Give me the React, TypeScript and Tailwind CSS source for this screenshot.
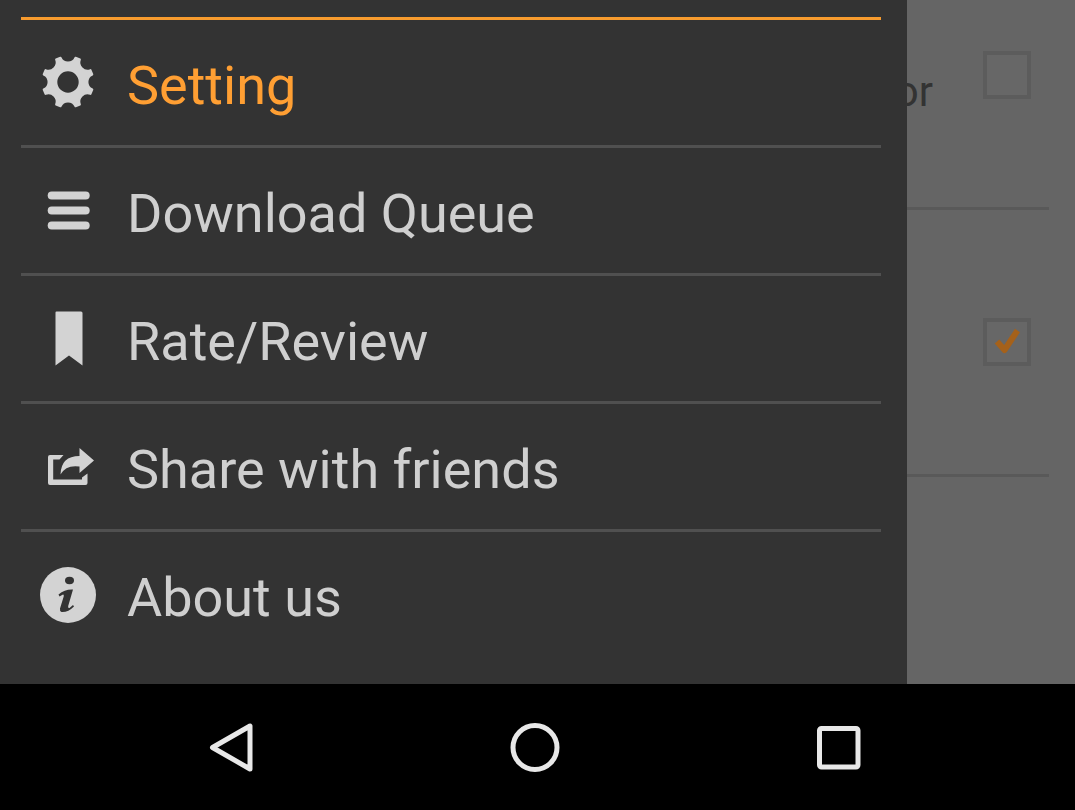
import type { ReactNode } from 'react';

const GearIcon = () => (
  <svg viewBox="-28 -27 56 56" className="size-14" fill="#d3d3d3" aria-hidden="true">
    <path
      fillRule="evenodd"
      stroke="#d3d3d3"
      strokeWidth="2"
      strokeLinejoin="round"
      d="M-7.500 -24.300 A8.2 8.2 0 0 0 7.500 -24.300 L11.900 -22.500 A8.2 8.2 0 0 0 22.500 -11.900 L24.300 -7.500 A8.2 8.2 0 0 0 24.300 7.500 L22.500 11.900 A8.2 8.2 0 0 0 11.900 22.500 L7.500 24.300 A8.2 8.2 0 0 0 -7.500 24.300 L-11.900 22.500 A8.2 8.2 0 0 0 -22.500 11.900 L-24.300 7.500 A8.2 8.2 0 0 0 -24.300 -7.500 L-22.500 -11.900 A8.2 8.2 0 0 0 -11.900 -22.500 Z M0 -11.7 A11.7 11.7 0 1 0 0 11.7 A11.7 11.7 0 1 0 0 -11.7 Z"
    />
  </svg>
);

const QueueIcon = () => (
  <svg viewBox="0 0 56 56" className="size-14" fill="#d3d3d3" aria-hidden="true">
    <rect x="7.700" y="8.500" width="42" height="8" rx="4" />
    <rect x="7.700" y="23.500" width="42" height="8" rx="4" />
    <rect x="7.700" y="38.500" width="42" height="8" rx="4" />
  </svg>
);

const BookmarkIcon = () => (
  <svg viewBox="0 0 56 56" className="size-14" fill="#d3d3d3" aria-hidden="true">
    <path d="M16.500 0.500 H41 Q42.500 0.500 42.500 2 V54.500 L29 44.500 L15.500 54.500 V1.500 Q15.500 0.500 16.500 0.500 Z" />
  </svg>
);

const ShareIcon = () => (
  <svg viewBox="0 0 56 56" className="size-14" fill="#d3d3d3" aria-hidden="true">
    <path d="M10 16 H23.500 L19.500 20.500 H13.200 V40.500 H42 V38.500 L47.500 34.500 V44 Q47.500 46 45.500 46 H10 Q8 46 8 44 V18 Q8 16 10 16 Z" />
    <path d="M39.500 9 L54 21.500 L39.500 34 V27.500 Q26 25.500 20.500 35.500 Q21 17 39.500 17 Z" />
  </svg>
);

const InfoIcon = () => (
  <svg viewBox="0 0 56 56" className="size-14" aria-hidden="true">
    <circle cx="28" cy="28" r="28" fill="#d3d3d3" />
    <ellipse cx="29.500" cy="13.500" rx="4.500" ry="3.700" fill="#333" />
    <path
      fill="#333"
      d="M18.500 27.500 Q25 22 33 22.500 L28.200 39 Q27.700 41.500 29.500 41 L33 38 L34 39.500 Q28 45.500 21.500 45 Q19.500 44 20 41.500 L23.700 29.500 Q24.200 27 22.500 27.700 L19.500 29.500 Z"
    />
  </svg>
);

type Item = { label: string; icon: ReactNode; active?: boolean };

const items: Item[] = [
  { label: 'Setting', icon: <GearIcon />, active: true },
  { label: 'Download Queue', icon: <QueueIcon /> },
  { label: 'Rate/Review', icon: <BookmarkIcon /> },
  { label: 'Share with friends', icon: <ShareIcon /> },
  { label: 'About us', icon: <InfoIcon /> },
];

function Option({ label, text, checked }: { label: string; text?: string; checked?: boolean }) {
  return (
    <label className="mr-[26px] flex h-[267px] items-start justify-between border-b-3 border-[#595959]">
      <span className="flex w-[26px] justify-end overflow-hidden pt-[125px] text-[42px] leading-[48px] whitespace-nowrap text-[#333]">
        {text}
      </span>
      <span className="relative mt-[108px] mr-[18px] size-12">
        <input
          type="checkbox"
          aria-label={label}
          defaultChecked={checked}
          className="peer block size-12 appearance-none border-4 border-[#5c5c5c] bg-[#676767]"
        />
        <svg
          viewBox="0 0 48 48"
          className="pointer-events-none absolute inset-0 hidden size-12 peer-checked:block"
          fill="none"
          stroke="#a5611a"
          strokeWidth="6"
          aria-hidden="true"
        >
          <path d="M14 23.500 L21.500 32 L34.500 12.500" strokeLinejoin="round" />
        </svg>
      </span>
    </label>
  );
}

export default function App() {
  return (
    <div className="flex min-h-screen flex-col bg-black font-[Roboto,sans-serif]">
      <div className="flex grow bg-[#656565]">
        <nav aria-label="Main menu" className="min-w-0 grow bg-[#333] pr-[26px] pl-[21px]">
          <div className="h-5 border-b-3 border-[#f79b2e]" />
          <ul>
            {items.map((item) => (
              <li key={item.label} className="border-b-3 border-[#505050] last:border-transparent">
                <a
                  href="#"
                  className={`flex h-[125px] items-center gap-[31px] pl-[19px] text-[54px] leading-[64px] ${
                    item.active ? 'text-[#ff9f33]' : 'text-[#cfcfcf]'
                  }`}
                >
                  {item.icon}
                  <span className="pt-[6px] whitespace-nowrap">{item.label}</span>
                </a>
              </li>
            ))}
          </ul>
        </nav>
        <section aria-label="Options" className="w-[168px] shrink-0 overflow-hidden">
          <div className="-mt-[57px]">
            <Option label="First option" text="or" />
            <Option label="Second option" checked />
          </div>
        </section>
      </div>
      <footer className="flex h-[126px] shrink-0 items-center justify-center gap-[248px] pr-[5px]">
        <button type="button" aria-label="Back">
          <svg viewBox="0 0 56 56" className="size-14" fill="none" stroke="#e8e8e8" strokeWidth="5" strokeLinejoin="round">
            <path d="M47 7 V50 L9.500 28.500 Z" />
          </svg>
        </button>
        <button type="button" aria-label="Home">
          <svg viewBox="0 0 56 56" className="size-14" fill="none" stroke="#e8e8e8" strokeWidth="5">
            <circle cx="28" cy="28.500" r="22" />
          </svg>
        </button>
        <button type="button" aria-label="Recent apps">
          <svg viewBox="0 0 56 56" className="size-14" fill="none" stroke="#e8e8e8" strokeWidth="5">
            <rect x="8.500" y="9.500" width="38.500" height="38.500" rx="2" />
          </svg>
        </button>
      </footer>
    </div>
  );
}
